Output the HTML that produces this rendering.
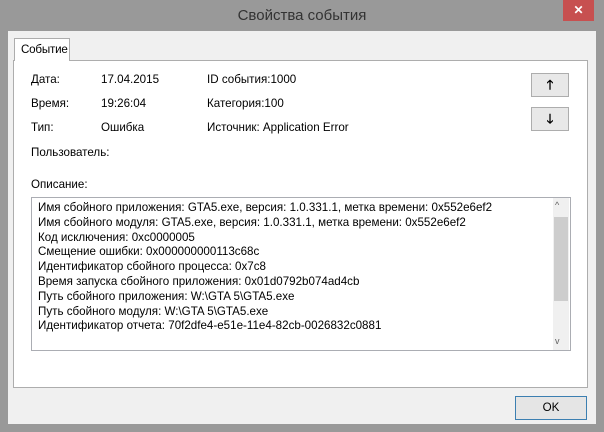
<!DOCTYPE html><html><head><style>
*{margin:0;padding:0;box-sizing:border-box}
body{width:604px;height:432px;background:#999;font-family:"Liberation Sans",sans-serif;font-size:11.6px;color:#000;position:relative;overflow:hidden}
.a{position:absolute;white-space:nowrap}
.title{left:0;width:604px;top:7px;text-align:center;font-size:15px;color:#333}
.close{left:563px;top:0;width:31px;height:21px;background:#c75050;color:#fff;text-align:center;font-size:12px;line-height:21px;font-weight:bold}
.client{left:8px;top:31px;width:588px;height:393px;background:#f0f0f0}
.panel{left:13px;top:60px;width:575px;height:328px;background:#fff;border:1px solid #adadad}
.tab{left:14px;top:38px;width:56px;height:23px;background:#fff;border:1px solid #adadad;border-bottom:none;padding:4px 0 0 6px;letter-spacing:-0.2px}
.btn{background:#e8e8e8;border:1px solid #adadad;text-align:center}
.tb{left:31px;top:197px;width:540px;height:154px;border:1px solid #abadb3;background:#fff}
.l{left:38px;line-height:14.8px;top:201px}
</style></head><body>
<div class="a title">Свойства события</div>
<div class="a close">✕</div>
<div class="a client"></div>
<div class="a panel"></div>
<div class="a tab">Событие</div>
<div class="a" style="left:31px;top:73px">Дата:</div>
<div class="a" style="left:101px;top:73px">17.04.2015</div>
<div class="a" style="left:207px;top:73px">ID события:1000</div>
<div class="a" style="left:31px;top:97px">Время:</div>
<div class="a" style="left:101px;top:97px">19:26:04</div>
<div class="a" style="left:207px;top:97px">Категория:100</div>
<div class="a" style="left:31px;top:121px">Тип:</div>
<div class="a" style="left:101px;top:121px">Ошибка</div>
<div class="a" style="left:207px;top:121px">Источник: Application Error</div>
<div class="a" style="left:31px;top:146px">Пользователь:</div>
<div class="a" style="left:31px;top:178px">Описание:</div>
<div class="a btn" style="left:531px;top:73px;width:38px;height:24px;line-height:22px;font-weight:bold;font-size:13px">🡑</div>
<div class="a btn" style="left:531px;top:107px;width:38px;height:24px;line-height:22px;font-weight:bold;font-size:13px">🡓</div>
<div class="a tb"></div>
<div class="a" style="left:553px;top:198px;width:16px;height:152px;background:#f0f0f0"></div>
<div class="a" style="left:554px;top:217px;width:14px;height:84px;background:#cdcdcd"></div>
<div class="a" style="left:555px;top:200px;font-size:9px;color:#606060">^</div>
<div class="a" style="left:555px;top:336px;font-size:9px;color:#606060">v</div>
<div class="a l">Имя сбойного приложения: GTA5.exe, версия: 1.0.331.1, метка времени: 0x552e6ef2<br>Имя сбойного модуля: GTA5.exe, версия: 1.0.331.1, метка времени: 0x552e6ef2<br>Код исключения: 0xc0000005<br>Смещение ошибки: 0x000000000113c68c<br>Идентификатор сбойного процесса: 0x7c8<br>Время запуска сбойного приложения: 0x01d0792b074ad4cb<br>Путь сбойного приложения: W:\GTA 5\GTA5.exe<br>Путь сбойного модуля: W:\GTA 5\GTA5.exe<br>Идентификатор отчета: 70f2dfe4-e51e-11e4-82cb-0026832c0881</div>
<div class="a btn" style="left:515px;top:396px;width:72px;height:24px;line-height:22px;border-color:#3c7fb1;background:#e5e5e5">OK</div>
</body></html>
